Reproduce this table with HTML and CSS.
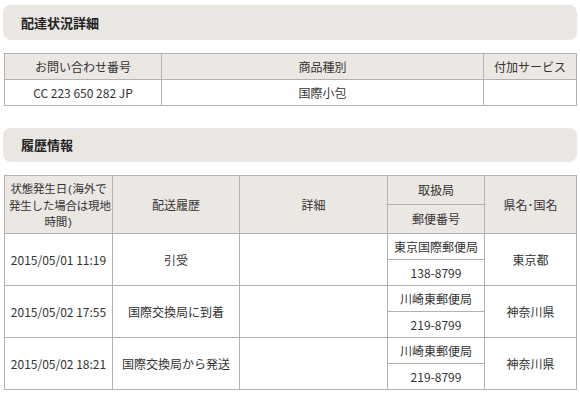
FILE: index.html
```html
<!DOCTYPE html>
<html lang="ja">
<head>
<meta charset="utf-8">
<link rel="stylesheet" href="styles.css">
</head>
<body>
<div class="page">
  <h2 class="bar">配達状況詳細</h2>
  <table class="grid t1">
    <colgroup><col class="c157"><col class="c322"><col></colgroup>
    <tr class="r26"><th>お問い合わせ番号</th><th>商品種別</th><th>付加サービス</th></tr>
    <tr class="r26"><td>CC 223 650 282 JP</td><td>国際小包</td><td></td></tr>
  </table>

  <h2 class="bar bar2">履歴情報</h2>
  <table class="grid t2">
    <colgroup><col class="c108"><col class="c127"><col class="c148"><col class="c97"><col></colgroup>
    <tr class="r30">
      <th rowspan="2" class="wrap"><p class="ln">状態発生日<span class="paren">(</span>海外で</p><p class="ln">発生した場合は現地</p><p class="ln">時間<span class="paren">)</span></p></th>
      <th rowspan="2">配送履歴</th>
      <th rowspan="2">詳細</th>
      <th>取扱局</th>
      <th rowspan="2">県名･国名</th>
    </tr>
    <tr class="r30"><th>郵便番号</th></tr>

    <tr class="r26"><td rowspan="2">2015/05/01 11:19</td><td rowspan="2">引受</td><td rowspan="2"></td><td>東京国際郵便局</td><td rowspan="2">東京都</td></tr>
    <tr class="r26"><td>138-8799</td></tr>

    <tr class="r26"><td rowspan="2">2015/05/02 17:55</td><td rowspan="2">国際交換局に到着</td><td rowspan="2"></td><td>川崎東郵便局</td><td rowspan="2">神奈川県</td></tr>
    <tr class="r26"><td>219-8799</td></tr>

    <tr class="r26"><td rowspan="2">2015/05/02 18:21</td><td rowspan="2">国際交換局から発送</td><td rowspan="2"></td><td>川崎東郵便局</td><td rowspan="2">神奈川県</td></tr>
    <tr class="r26"><td>219-8799</td></tr>
  </table>
</div>
</body>
</html>
```

FILE: styles.css
```css
html, body {
  margin: 0;
  padding: 0;
  background: #ffffff;
}
body {
  font-family: "Noto Sans CJK JP", "Liberation Sans", sans-serif;
  font-size: 12px;
  color: #333333;
}
.page {
  padding: 5px 3px 0 3px;
  width: 574px;
}
.bar {
  margin: 0;
  height: 35px;
  line-height: 35px;
  padding-left: 18px;
  background: #eae6e2;
  border-radius: 8px;
  font-size: 13px;
  font-weight: bold;
  color: #222222;
}
.bar2 {
  margin-top: 22px;
  height: 34px;
  line-height: 33px;
}
.grid {
  border-collapse: collapse;
  margin-left: 1px;
  width: 573px;
  table-layout: fixed;
}
.t1 { margin-top: 13px; }
.t2 { margin-top: 13px; }
.grid th, .grid td {
  border: 1px solid #b2b2b2;
  padding: 0 4px;
  text-align: center;
  vertical-align: middle;
  font-weight: normal;
  line-height: 16px;
}
.grid th {
  background: #ebe7e3;
}
.c157 { width: 157px; }
.c322 { width: 322px; }
.c108 { width: 108px; }
.c127 { width: 127px; }
.c148 { width: 148px; }
.c97 { width: 97px; }
.r26 { height: 26px; }
.r30 { height: 29px; }
.wrap {
  padding: 0;
}
.ln {
  margin: 0;
  font-size: 11.5px;
  letter-spacing: -0.2px;
  white-space: nowrap;
  text-align: center;
}
.paren {
  font-family: "Liberation Sans", sans-serif;
  padding: 0 1px;
}
```
